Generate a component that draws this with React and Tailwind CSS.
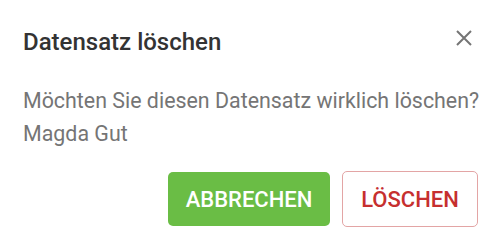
export default function App() {
  return (
    <div className="w-[501px] h-[252px] bg-white font-['Roboto',sans-serif] px-[23px] pt-[26px]">
      <div className="flex items-start justify-between h-[32px]">
        <h2 className="text-[24px] font-medium text-[#333333] leading-[32px]">Datensatz löschen</h2>
        <button className="w-[16px] h-[16px] mt-[4px] mr-[6px] flex items-center justify-center text-[#757575]">
          <svg width="16" height="16" viewBox="0 0 16 16" fill="none" stroke="currentColor" strokeWidth="2">
            <path d="M1 1 L15 15 M15 1 L1 15" />
          </svg>
        </button>
      </div>
      <div className="mt-[26px] text-[21.4px] leading-[33px] text-[#757575] whitespace-nowrap">
        <p>Möchten Sie diesen Datensatz wirklich löschen?</p>
        <p>Magda Gut</p>
      </div>
      <div className="mt-[22px] flex justify-end gap-[12px]">
        <button className="w-[162px] h-[54px] rounded-[5px] bg-[#6abd45] text-white text-[22px] font-medium uppercase">
          Abbrechen
        </button>
        <button className="w-[136px] h-[56px] -mt-[1px] rounded-[5px] border border-[#e3a5a5] text-[#c62f2f] text-[22px] font-medium uppercase">
          Löschen
        </button>
      </div>
    </div>
  );
}
